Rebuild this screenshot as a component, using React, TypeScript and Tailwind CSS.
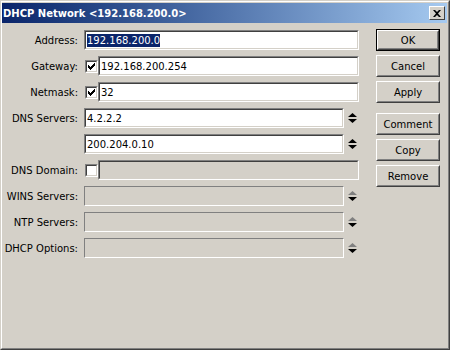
import React from "react";

const Arrows = ({ disabled }: { disabled?: boolean }) => (
  <svg width="9" height="10" viewBox="0 0 9 10" className="block">
    <polygon points="4.5,0 9,4 0,4" fill={disabled ? "#808080" : "#000"} />
    <polygon points="0,6 9,6 4.5,10" fill="#000" />
  </svg>
);

const Sunken = ({
  children,
  className = "",
  inner = "bg-white",
}: {
  children?: React.ReactNode;
  className?: string;
  inner?: string;
}) => (
  <div
    className={`border border-t-[#808080] border-l-[#808080] border-b-white border-r-white ${className}`}
  >
    <div
      className={`h-full border border-t-[#404040] border-l-[#404040] border-b-[#d4d0c8] border-r-[#d4d0c8] flex items-center pl-[1px] ${inner}`}
    >
      {children}
    </div>
  </div>
);

const Disabled = ({ className = "" }: { className?: string }) => (
  <div
    className={`border border-t-[#808080] border-l-[#808080] border-b-white border-r-white bg-[#d4d0c8] ${className}`}
  />
);

const Check = ({ checked }: { checked?: boolean }) => (
  <Sunken className="w-[13px] h-[13px] ml-[1px] shrink-0" inner="bg-white !pl-0 justify-center">
    {checked && (
      <svg width="7" height="7" viewBox="0 0 7 7" className="block">
        <path d="M0 2h1v1h1v1h1v-1h1v-1h1v-1h1v-1h1v3h-1v1h-1v1h-1v1h-1v1h-1v-1h-1v-1h-1z" fill="#000" />
      </svg>
    )}
  </Sunken>
);

const Button = ({ label, def }: { label: string; def?: boolean }) => (
  <div className={`w-[64px] h-[22px] ${def ? "border border-black" : ""}`}>
    <div className="h-full border border-t-white border-l-white border-b-[#404040] border-r-[#404040]">
      <div className="h-full border border-t-[#d4d0c8] border-l-[#d4d0c8] border-b-[#808080] border-r-[#808080] flex items-center justify-center">
        {label}
      </div>
    </div>
  </div>
);

const Row = ({ label, children }: { label: string; children?: React.ReactNode }) => (
  <div className="flex items-center h-[20px]">
    <div className="w-[76px] text-right whitespace-nowrap">{label}</div>
    <div className="ml-[6px] w-[275px] h-full flex items-center">{children}</div>
  </div>
);

export default function App() {
  return (
    <div className="w-[450px] h-[350px] bg-[#d4d0c8] text-black text-[10px] font-['DejaVu_Sans',sans-serif] border border-t-[#d4d0c8] border-l-[#d4d0c8] border-b-[#404040] border-r-[#404040] flex flex-col">
      <div className="flex-1 border border-t-white border-l-white border-b-[#808080] border-r-[#808080] pt-[1px] pr-[1px] flex flex-col">
        <div className="h-[20px] bg-gradient-to-r from-[#0a246a] to-[#a6caf0] flex items-center pl-[1px] pr-[2px]">
          <span className="text-white font-bold text-[10px] whitespace-nowrap">
            DHCP Network &lt;192.168.200.0&gt;
          </span>
          <div className="ml-auto w-[16px] h-[14px] bg-[#d4d0c8] border border-t-white border-l-white border-b-[#404040] border-r-[#404040] flex items-center justify-center">
            <svg width="8" height="7" viewBox="0 0 8 7" className="block">
              <path d="M0 0h2l2 2 2-2h2l-3 3.5 3 3.5h-2l-2-2-2 2h-2l3-3.5z" fill="#000" />
            </svg>
          </div>
        </div>
        <div className="flex pt-[6px]">
          <div className="flex flex-col gap-[6px] pt-[1px]">
            <Row label="Address:">
              <Sunken className="w-full h-full">
                <span className="bg-[#0a246a] text-white leading-[13px] px-0">192.168.200.0</span>
              </Sunken>
            </Row>
            <Row label="Gateway:">
              <Check checked />
              <Sunken className="flex-1 h-full">192.168.200.254</Sunken>
            </Row>
            <Row label="Netmask:">
              <Check checked />
              <Sunken className="flex-1 h-full">32</Sunken>
            </Row>
            <Row label="DNS Servers:">
              <Sunken className="w-[260px] h-full">4.2.2.2</Sunken>
              <div className="ml-[4px]">
                <Arrows />
              </div>
            </Row>
            <Row label="">
              <Sunken className="w-[260px] h-full">200.204.0.10</Sunken>
              <div className="ml-[4px]">
                <Arrows />
              </div>
            </Row>
            <Row label="DNS Domain:">
              <Check />
              <Sunken className="flex-1 h-full" inner="bg-[#d4d0c8]" />
            </Row>
            <Row label="WINS Servers:">
              <Disabled className="w-[260px] h-full" />
              <div className="ml-[4px]">
                <Arrows disabled />
              </div>
            </Row>
            <Row label="NTP Servers:">
              <Disabled className="w-[260px] h-full" />
              <div className="ml-[4px]">
                <Arrows disabled />
              </div>
            </Row>
            <Row label="DHCP Options:">
              <Disabled className="w-[260px] h-full" />
              <div className="ml-[4px]">
                <Arrows disabled />
              </div>
            </Row>
          </div>
          <div className="ml-[17px] flex flex-col gap-[4px]">
            <Button label="OK" def />
            <Button label="Cancel" />
            <Button label="Apply" />
            <div className="h-[2px]" />
            <Button label="Comment" />
            <Button label="Copy" />
            <Button label="Remove" />
          </div>
        </div>
      </div>
    </div>
  );
}
